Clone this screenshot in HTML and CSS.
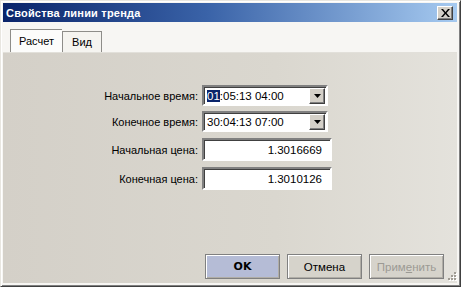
FILE: index.html
```html
<!DOCTYPE html>
<html>
<head>
<meta charset="utf-8">
<link rel="stylesheet" href="styles.css">
</head>
<body>
<div class="window">
  <div class="titlebar">
    <span class="title">Свойства линии тренда</span>
    <span class="close"><svg width="9" height="8" viewBox="0 0 9 8"><path d="M0 0h2l2.5 3 2.5-3h2L5.5 4 9 8H7L4.5 5 2 8H0l3.5-4z" fill="#000"/></svg></span>
  </div>
  <div class="tabstrip">
    <div class="tab active">Расчет</div>
    <div class="tab">Вид</div>
  </div>
  <div class="panel">
    <div class="form">
      <label class="lbl">Начальное время:</label>
      <div class="combo"><span class="val"><span class="sel">01</span>:05:13 04:00</span><span class="arrow"><svg width="7" height="4" viewBox="0 0 7 4"><path d="M0 0h7L3.5 4z" fill="#000"/></svg></span></div>
      <label class="lbl">Конечное время:</label>
      <div class="combo"><span class="val">30:04:13 07:00</span><span class="arrow"><svg width="7" height="4" viewBox="0 0 7 4"><path d="M0 0h7L3.5 4z" fill="#000"/></svg></span></div>
      <label class="lbl lbl-price">Начальная цена:</label>
      <div class="edit">1.3016669</div>
      <label class="lbl lbl-price">Конечная цена:</label>
      <div class="edit">1.3010126</div>
    </div>
    <div class="buttons">
      <div class="btn btn-ok">OK</div>
      <div class="btn">Отмена</div>
      <div class="btn btn-disabled">Прим<u>е</u>нить</div>
      <span class="grip"><svg width="11" height="11" viewBox="0 0 11 11"><g fill="#fff"><rect x="9" y="1" width="2" height="2"/><rect x="6" y="4" width="2" height="2"/><rect x="9" y="4" width="2" height="2"/><rect x="3" y="7" width="2" height="2"/><rect x="6" y="7" width="2" height="2"/><rect x="9" y="7" width="2" height="2"/></g><g fill="#a09c94"><rect x="8" y="0" width="2" height="2"/><rect x="5" y="3" width="2" height="2"/><rect x="8" y="3" width="2" height="2"/><rect x="2" y="6" width="2" height="2"/><rect x="5" y="6" width="2" height="2"/><rect x="8" y="6" width="2" height="2"/></g></svg></span>
    </div>
  </div>
</div>
</body>
</html>
```

FILE: styles.css
```css
html, body {
  margin: 0;
  padding: 0;
  background: #404040;
}
body {
  width: 461px;
  height: 287px;
  overflow: hidden;
  font-family: "Liberation Sans", "DejaVu Sans", sans-serif;
  font-size: 11px;
  color: #000;
}
.window {
  box-sizing: border-box;
  width: 461px;
  height: 287px;
  border-left: 1px solid #e8e6e0;
  border-top: 1px solid #e8e6e0;
  border-right: 1px solid #404040;
  border-bottom: 1px solid #404040;
  box-shadow: inset 1px 1px 0 #fff, inset -1px -1px 0 #808080;
  padding: 2px 3px 3px 2px;
  background: #f7f6f3;
  display: flex;
  flex-direction: column;
}
.titlebar {
  height: 19px;
  flex: none;
  background: linear-gradient(to right, #0a246a 0%, #3a63a8 45%, #a6caf0 100%);
  display: flex;
  align-items: center;
  justify-content: space-between;
  padding: 0 4px 0 3px;
}
.title {
  color: #fff;
  font-weight: bold;
  font-size: 11px;
  font-family: "Liberation Sans", sans-serif;
  letter-spacing: 0.2px;
}
.close {
  box-sizing: border-box;
  width: 16px;
  height: 14px;
  background: #d4d0c8;
  border: 1px solid;
  border-color: #fff #404040 #404040 #fff;
  box-shadow: inset -1px -1px 0 #808080;
  display: flex;
  align-items: center;
  justify-content: center;
}
.tabstrip {
  flex: none;
  height: 30px;
  display: flex;
  align-items: flex-end;
  padding-left: 7px;
  background: #f7f6f3;
  border-bottom: 1px solid #e2e0da;
}
.tab {
  box-sizing: border-box;
  width: 40px;
  height: 21px;
  border: 1px solid #8e8d89;
  border-bottom: none;
  background: #f5f4f0;
  display: flex;
  align-items: center;
  justify-content: center;
  font-size: 11px;
}
.tab.active {
  width: 52px;
  height: 23px;
  background: #fcfcfb;
  border-right: none;
}
.panel {
  flex: 1;
  background: linear-gradient(to right, #d4d0c8 0%, #dad7cf 60%, #e4e2dc 100%);
  display: flex;
  flex-direction: column;
  justify-content: space-between;
}
.form {
  display: grid;
  grid-template-columns: 195px auto;
  column-gap: 4px;
  row-gap: 5px;
  margin-top: 32px;
  align-items: center;
  justify-items: start;
}
.lbl {
  justify-self: end;
  font-size: 11px;
}
.combo {
  box-sizing: border-box;
  width: 126px;
  height: 21px;
  background: #fff;
  border: 2px solid;
  border-color: #808080 #fff #fff #808080;
  box-shadow: inset 1px 1px 0 #404040;
  display: flex;
  align-items: center;
  justify-content: space-between;
  padding-left: 3px;
  padding-right: 1px;
  font-size: 11.5px;
}
.sel {
  background: #0a246a;
  color: #fff;
}
.arrow {
  box-sizing: border-box;
  width: 16px;
  height: 16px;
  background: #d4d0c8;
  border: 1px solid;
  border-color: #fff #404040 #404040 #fff;
  box-shadow: inset -1px -1px 0 #808080;
  display: flex;
  align-items: center;
  justify-content: center;
}
.edit {
  box-sizing: border-box;
  width: 130px;
  height: 23px;
  background: #fff;
  border: 2px solid;
  border-color: #808080 #fff #fff #808080;
  box-shadow: inset 1px 1px 0 #404040;
  display: flex;
  align-items: center;
  justify-content: flex-end;
  padding-right: 8px;
  font-size: 11.5px;
  margin-top: 1px;
}
.lbl-price {
  margin-top: 1px;
}
.buttons {
  display: flex;
  justify-content: flex-end;
  align-items: flex-end;
  gap: 7px;
  padding-bottom: 4px;
  position: relative;
}
.btn {
  box-sizing: border-box;
  width: 75px;
  height: 25px;
  border: 1px solid #808080;
  box-shadow: inset 1px 1px 0 #fff, inset -1px -1px 0 #b0ada6;
  background: #d6d3cb;
  display: flex;
  align-items: center;
  justify-content: center;
  font-size: 11.5px;
}
.btn-ok {
  background: #b5bcd6;
  font-weight: bold;
  font-family: "DejaVu Sans", sans-serif;
  font-size: 11px;
}
.btn-disabled {
  color: #9c9a94;
  margin-right: 13px;
}
.btn-disabled u {
  text-decoration-color: #9c9a94;
}
.grip {
  position: absolute;
  right: 0;
  bottom: 0;
  line-height: 0;
}
```
